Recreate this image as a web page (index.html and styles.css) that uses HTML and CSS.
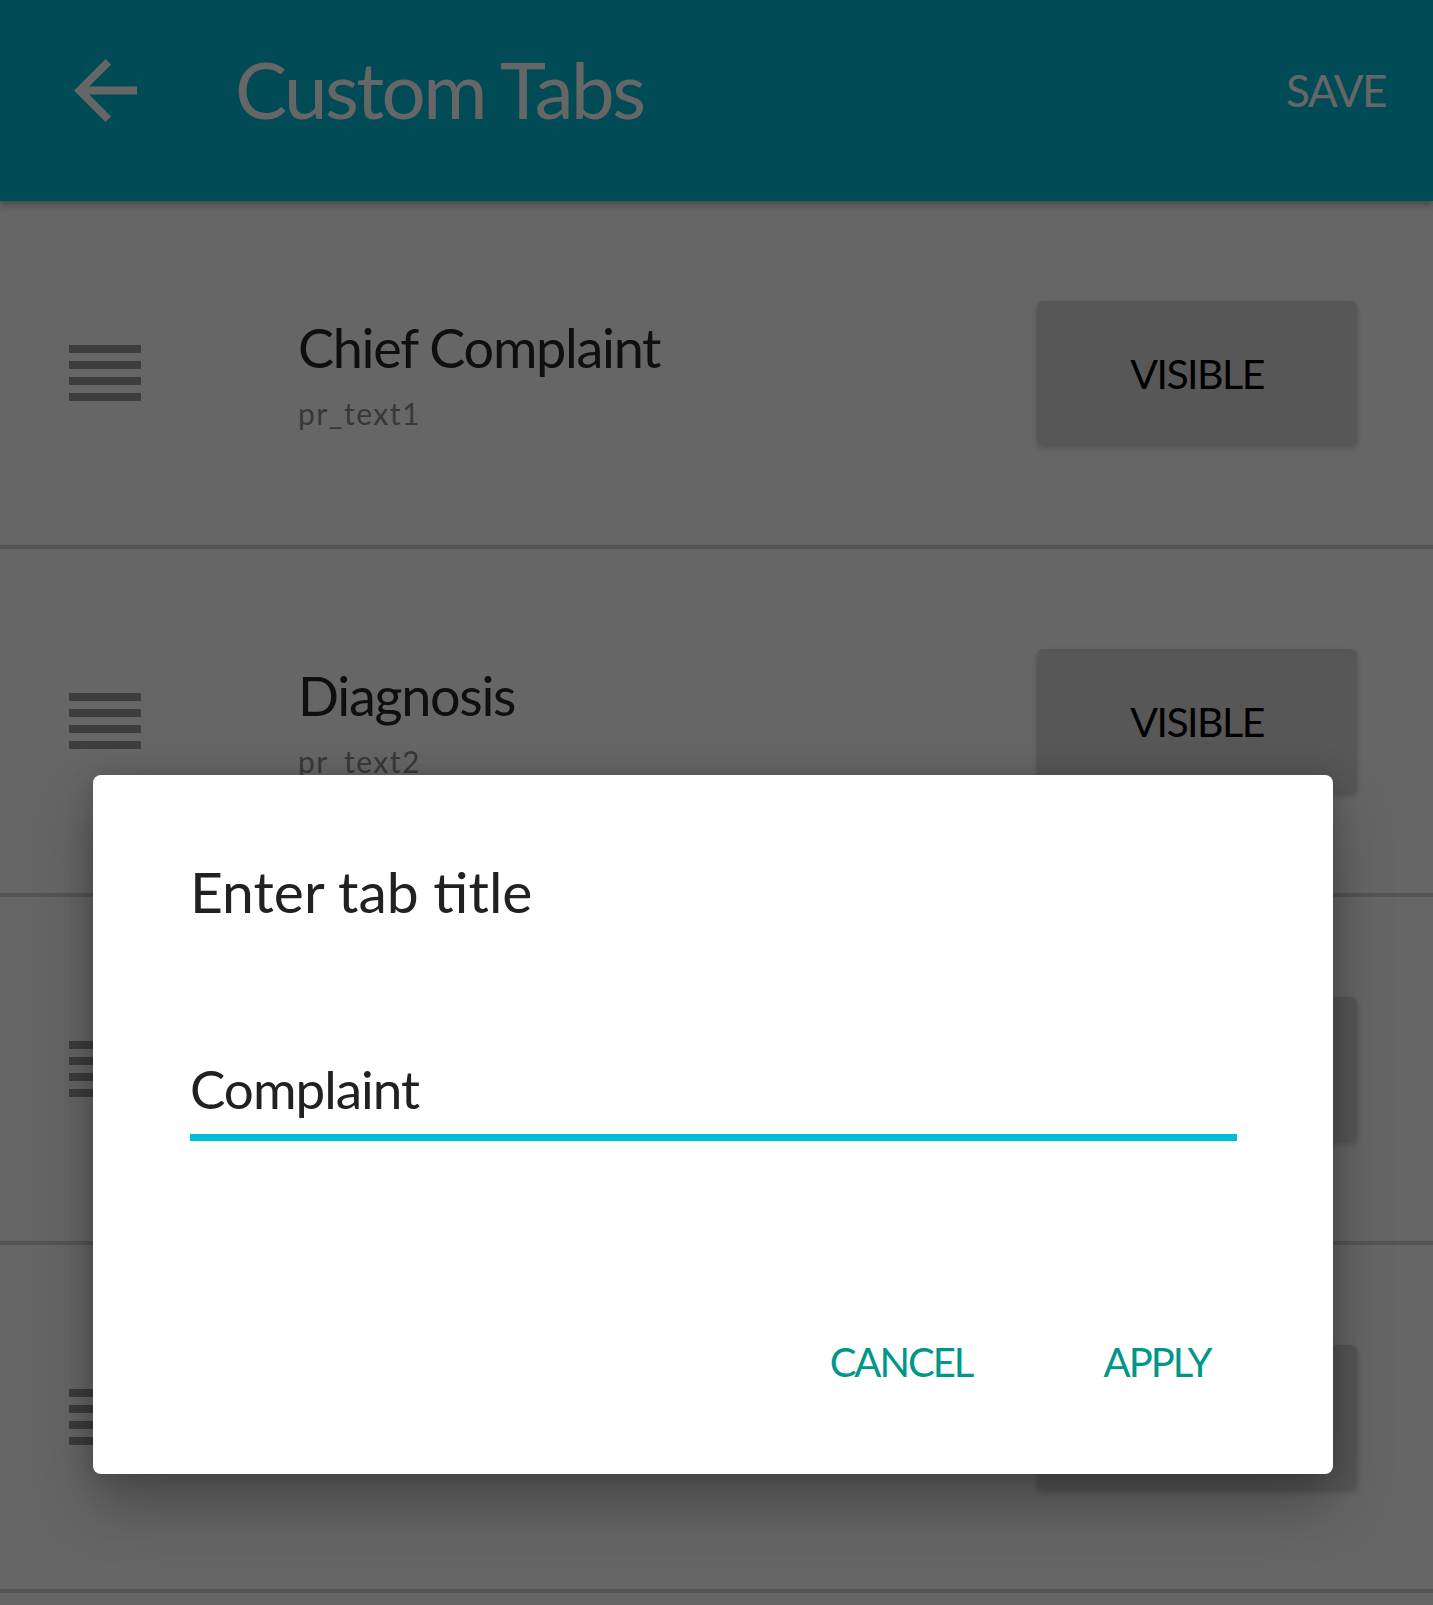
FILE: index.html
```html
<!DOCTYPE html>
<html>

<head>
    <meta charset="utf-8">
    <link rel="stylesheet" href="styles.css">
</head>

<body>
    <!-- Toolbar -->
    <header class="app-bar">
        <svg class="back-icon" viewBox="4 4 16 16">
            <path d="M20 11H7.83l5.59-5.59L12 4l-8 8 8 8 1.41-1.41L7.83 13H20v-2z" />
        </svg>
        <h1 class="app-title">Custom Tabs</h1>
        <span class="save-action">SAVE</span>
    </header>

    <!-- Tab list -->
    <main class="tab-list">
        <div class="tab-row">
            <div class="drag-handle"><span></span><span></span><span></span><span></span></div>
            <div class="tab-text">
                <div class="tab-name">Chief Complaint</div>
                <div class="tab-key">pr_text1</div>
            </div>
            <button class="visible-btn">VISIBLE</button>
        </div>
        <div class="tab-row">
            <div class="drag-handle"><span></span><span></span><span></span><span></span></div>
            <div class="tab-text">
                <div class="tab-name">Diagnosis</div>
                <div class="tab-key">pr_text2</div>
            </div>
            <button class="visible-btn">VISIBLE</button>
        </div>
        <!-- this row is covered by the dialog, its labels don't show -->
        <div class="tab-row">
            <div class="drag-handle"><span></span><span></span><span></span><span></span></div>
            <div class="tab-text"></div>
            <button class="visible-btn"></button>
        </div>
        <div class="tab-row">
            <div class="drag-handle"><span></span><span></span><span></span><span></span></div>
            <div class="tab-text">
                <div class="tab-name">Advice</div>
                <div class="tab-key">pr_text4</div>
            </div>
            <button class="visible-btn"></button>
        </div>
    </main>

    <!-- Dialog -->
    <div class="scrim"></div>
    <div class="dialog">
        <h2 class="dialog-title">Enter tab title</h2>
        <div class="dialog-input">Complaint</div>
        <div class="dialog-actions">
            <button class="text-btn">CANCEL</button>
            <button class="text-btn">APPLY</button>
        </div>
    </div>
</body>

</html>
```

FILE: styles.css
```css
* {
    margin: 0;
    padding: 0;
    box-sizing: border-box;
    font-family: "Lato", sans-serif;
}

body {
    width: 1433px;
    height: 1605px;
    overflow: hidden;
    background: #fff;
    position: relative;
}

.app-bar {
    height: 201px;
    background: #00bcd4;
    color: #fff;
    display: flex;
    align-items: center;
    padding: 0 47px 21px 74px;
    box-shadow: 0 4px 8px rgba(0, 0, 0, 0.3);
    position: relative;
    z-index: 1;
}

.back-icon {
    width: 63px;
    height: 63px;
    fill: #fff;
    flex-shrink: 0;
}

.app-title {
    margin-left: 98px;
    font-size: 78px;
    font-weight: 400;
    line-height: 1.2;
    letter-spacing: -2.5px;
}

.save-action {
    margin-left: auto;
    font-size: 44px;
    letter-spacing: -1.5px;
}

.tab-row {
    height: 348px;
    border-bottom: 4px solid #d4d4d4;
    display: flex;
    align-items: center;
    padding: 0 76px 0 69px;
}

.drag-handle {
    width: 72px;
    display: flex;
    flex-direction: column;
    gap: 8px;
}

.drag-handle span {
    height: 8px;
    background: #999;
}

.tab-text {
    align-self: flex-start;
    margin-top: 114px;
    margin-left: 157px;
}

.tab-name {
    font-size: 54px;
    line-height: 65px;
    letter-spacing: -1.3px;
    color: #262626;
}

.tab-key {
    font-size: 30px;
    line-height: 35px;
    margin-top: 16px;
    letter-spacing: 1.5px;
    color: #8c8c8c;
}

.visible-btn {
    margin-left: auto;
    width: 320px;
    height: 144px;
    border: none;
    border-radius: 6px;
    background: #dadada;
    box-shadow: 0 3px 6px rgba(0, 0, 0, 0.2);
    font-size: 41px;
    letter-spacing: -1.5px;
    color: #000;
}

.scrim {
    position: absolute;
    inset: 0;
    background: rgba(0, 0, 0, 0.6);
    z-index: 2;
}

.dialog {
    position: absolute;
    left: 93px;
    top: 775px;
    width: 1240px;
    height: 699px;
    z-index: 3;
    background: #fff;
    border-radius: 8px;
    padding: 82px 96px 0 97px;
    box-shadow: 0 30px 60px rgba(0, 0, 0, 0.3), 0 0 24px rgba(0, 0, 0, 0.15);
}

.dialog-title {
    font-size: 57px;
    line-height: 68px;
    font-weight: 400;
    color: #212121;
}

.dialog-input {
    margin-top: 132px;
    font-size: 53px;
    line-height: 64px;
    letter-spacing: -1px;
    padding-bottom: 13px;
    border-bottom: 7px solid #00bcd4;
    color: #212121;
}

.dialog-actions {
    display: flex;
    justify-content: flex-end;
    gap: 96px;
    margin-top: 195px;
}

.text-btn {
    width: 160px;
    background: none;
    border: none;
    font-size: 40px;
    line-height: 52px;
    letter-spacing: -2px;
    color: #009688;
}
```
